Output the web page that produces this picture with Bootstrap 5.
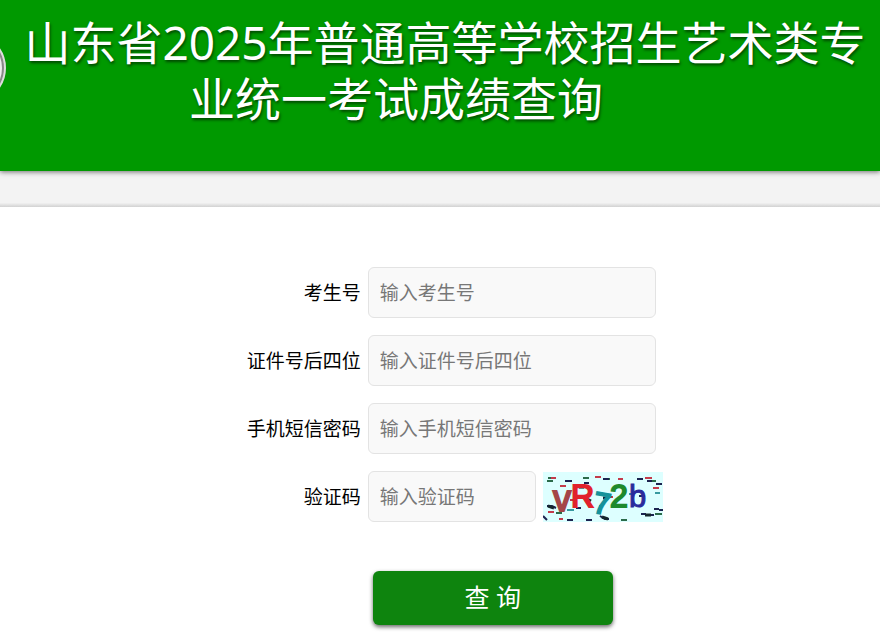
<!DOCTYPE html>
<html lang="zh-CN">
<head>
<meta charset="utf-8">
<meta name="viewport" content="width=device-width, initial-scale=1">
<title>山东省2025年普通高等学校招生艺术类专业统一考试成绩查询</title>
<link href="https://cdn.jsdelivr.net/npm/bootstrap@5.3.0/dist/css/bootstrap.min.css" rel="stylesheet">
<style>
body { font-family: "Noto Sans", "Noto Sans CJK SC", sans-serif; font-size: 19px; background: #fff; color: #000; overflow-x: hidden; }
.site-header { background: #090; padding: 14px 8px 45px 0; box-shadow: 0 1px 5px rgba(0,0,0,.55); }
.site-title { margin: 0 0 0 -80px; font-size: 46px; line-height: 56px; font-weight: 400; color: #fff; text-shadow: 1px 2px 3px rgba(0,0,0,.55); }
.site-logo { width: 70px; height: 70px; vertical-align: top; margin: 19px 18px -40px 10px; }
.band { height: 36px; background: linear-gradient(#f3f3f3 88%, #d2d2d2); }
.query-form { padding-top: 60px; }
.field-list { gap: 17px; }
.field { gap: 7px; }
.field-label { flex: 0 0 41%; text-align: right; line-height: 28px; }
.field-input { width: 288px; height: 51px; padding: 0 11px; font-size: 19px; background: #f9f9f9; border: 1px solid #e3e3e3; border-radius: 6px; }
.field-input::placeholder { color: #777; }
.field-short { width: 168px; }
.submit-row { padding: 49px 0 16px 12%; }
.btn-query { width: 240px; height: 54px; padding: 0; font-size: 25px; color: #fff; background: #0e840e; border: 0; border-radius: 6px; box-shadow: 0 2px 4px rgba(0,0,0,.6); }
.btn-query:hover { color: #fff; background: #0a730a; }
</style>
<script src="https://cdn.jsdelivr.net/npm/bootstrap@5.3.0/dist/js/bootstrap.bundle.min.js"></script>
</head>
<body>
<header class="site-header position-relative">
  <h1 class="site-title text-center"><svg class="site-logo" viewBox="0 0 70 70" aria-hidden="true"><circle cx="35" cy="35" r="34" fill="#eee" stroke="#ddd" stroke-width="2"/><circle cx="35" cy="35" r="32" fill="none" stroke="#888" stroke-width="2"/><circle cx="35" cy="35" r="28" fill="#fff" stroke="#bbb"/></svg>山东省2025年普通高等学校招生艺术类专业统一考试成绩查询</h1>
</header>
<div class="band"></div>
<main>
  <form class="query-form">
    <div class="field-list d-flex flex-column">
      <div class="field d-flex align-items-center">
        <label class="field-label" for="examNo">考生号</label>
        <input class="field-input form-control" id="examNo" type="text" placeholder="输入考生号">
      </div>
      <div class="field d-flex align-items-center">
        <label class="field-label" for="idTail">证件号后四位</label>
        <input class="field-input form-control" id="idTail" type="text" placeholder="输入证件号后四位">
      </div>
      <div class="field d-flex align-items-center">
        <label class="field-label" for="smsCode">手机短信密码</label>
        <input class="field-input form-control" id="smsCode" type="password" placeholder="输入手机短信密码">
      </div>
      <div class="field d-flex align-items-center">
        <label class="field-label" for="captcha">验证码</label>
        <input class="field-input field-short form-control" id="captcha" type="text" placeholder="输入验证码">
        <svg class="flex-shrink-0" width="120" height="50" viewBox="0 0 120 50" role="img" aria-label="验证码图片">
          <rect width="120" height="50" fill="#dff"/>
          <g fill="none" stroke-width="2">
            <path stroke="#2b6b4a" d="M5 6h8M4 9h6M40 6h6M60 7h7M13 41h6M78 48h6M108 9h5M56 34h4M112 42h7"/>
            <path stroke="#c33b4b" d="M8 6h5M17 14h6M52 5h6M75 7h5M102 6h7M110 16h6M5 40h6M16 47h4M62 25h8M27 28h5"/>
            <path stroke="#1c2450" d="M22 9h7M41 11h5M60 7h6M94 7h6M104 9h5M113 12h6M4 34h5l4 2M24 48h6M43 48h6M57 44l5 3h4M98 42h5M103 43h8M111 37h5M116 38h4M96 24h6M33 36h5M0 44l4 4"/>
            <path stroke="#14262c" stroke-width="3" d="M5 34l6 2M59 45l6 2M102 43h6M42 26l6 3M60 26h5"/>
            <path stroke="#379aa0" d="M36 16h5M86 22h4M112 21h5M24 38h7"/>
          </g>
          <g font-family="Liberation Sans, sans-serif" stroke-width="2">
            <text x="10" y="39" font-size="36" fill="#a44648" stroke="#a44648">v</text>
            <text x="28" y="35" font-size="32" fill="#e1222c" stroke="#e1222c">R</text>
            <text x="51" y="42" font-size="30" fill="#16929a" stroke="#16929a" transform="rotate(10 60 30)">7</text>
            <text x="67" y="35" font-size="32" fill="#1d8a2c" stroke="#1d8a2c">2</text>
            <text x="86" y="35" font-size="31" fill="#2a2a9c" stroke="#2a2a9c" stroke-width="1">b</text>
          </g>
        </svg>
      </div>
    </div>
    <div class="submit-row d-flex justify-content-center">
      <button class="btn btn-query" type="submit">查 询</button>
    </div>
  </form>
</main>
</body>
</html>
